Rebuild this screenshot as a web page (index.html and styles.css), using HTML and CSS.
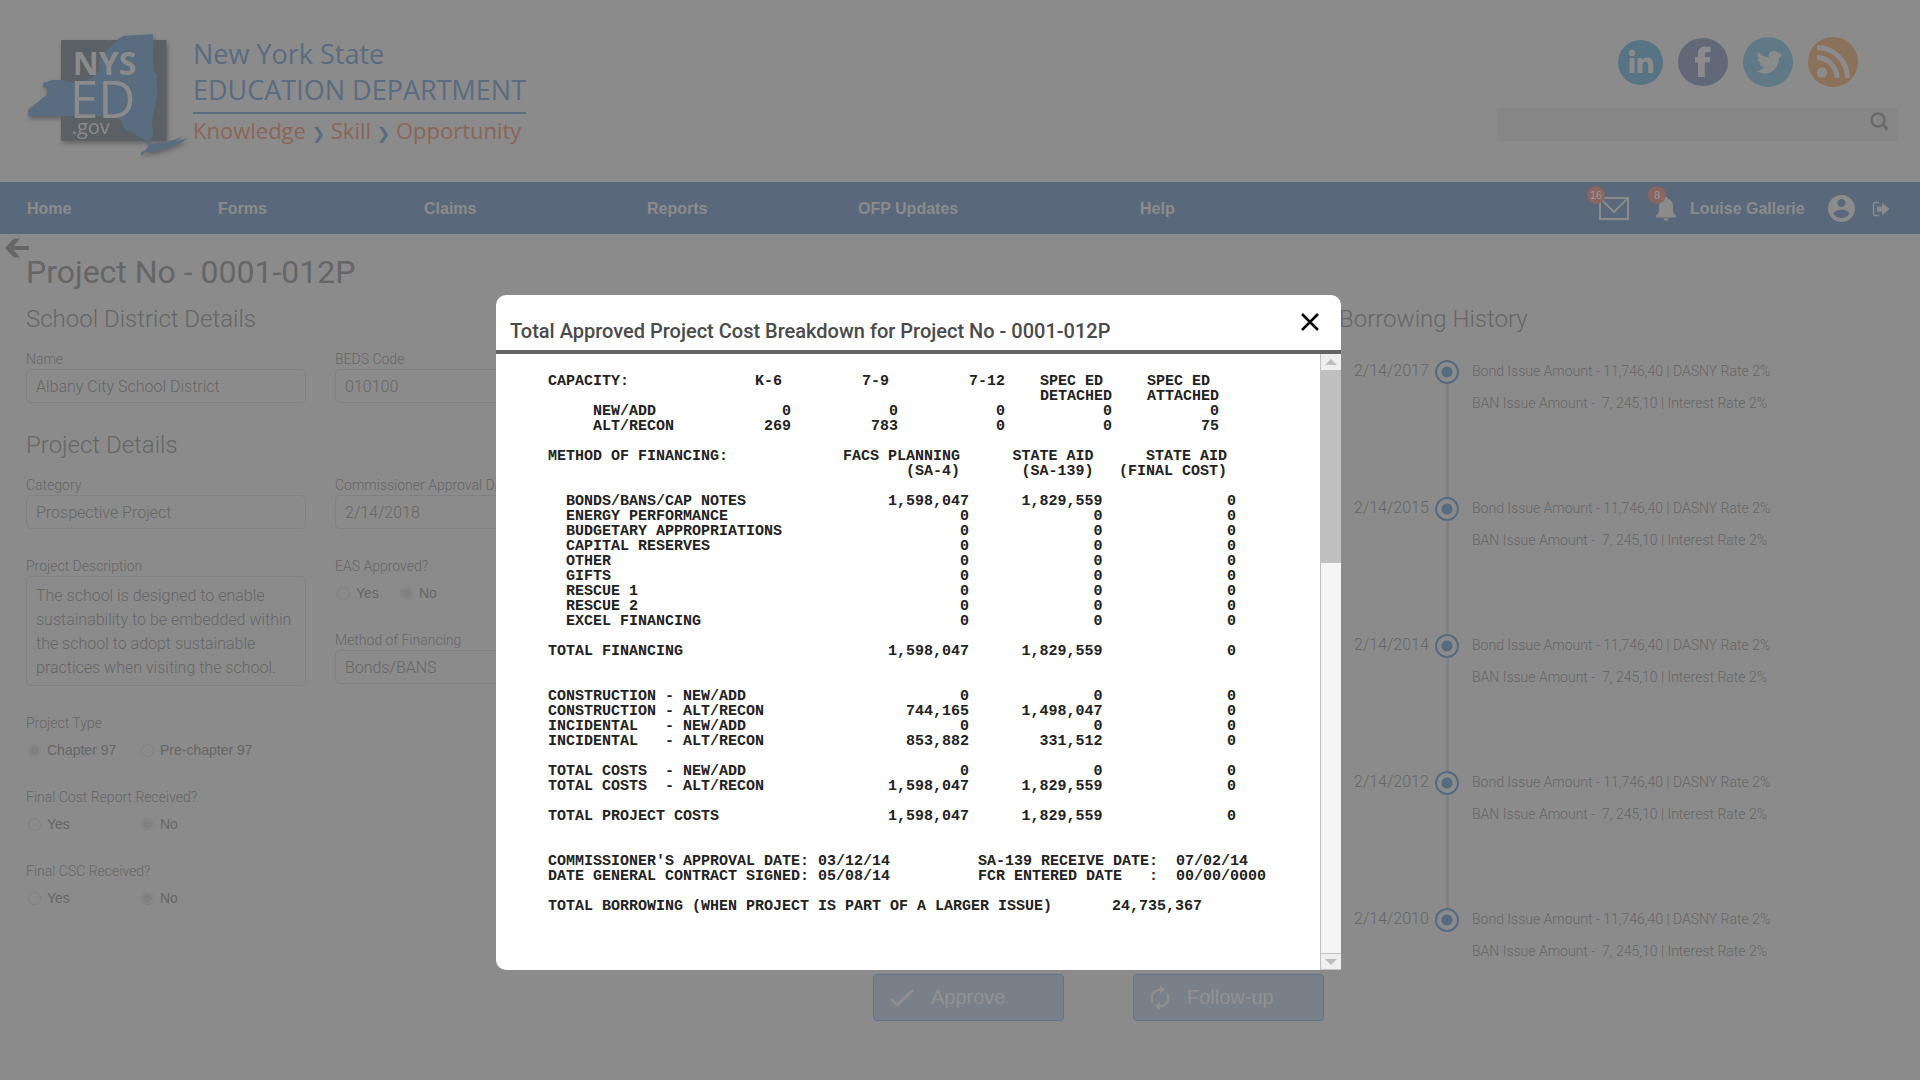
FILE: index.html
```html
<!DOCTYPE html>
<html lang="en">
<head>
<meta charset="utf-8">
<title>Project No - 0001-012P</title>
<link rel="stylesheet" href="styles.css">
</head>
<body>
<header class="top">
	<a class="brand" href="#">
		<svg class="brand-logo" viewBox="77 100 492 387" aria-hidden="true">
			<g class="logo-shadow" transform="scale(1.071 1)">
				<rect x="170" y="121" width="295" height="302" fill="#5a6064"/>
				<path fill="#5a6c7f" d="M78 350V330L130 285 131 265 119 262 120 250 145 241 178 241 202 250 255 236 275 215 278 170 300 150 330 118 347 108 427 104 429 140 426 160 430 215 438 225 440 290 430 340 424 365 428 405 424 412 415 434 430 432 465 426 495 418 515 408 492 425 525 416 500 432 440 454 404 459 396 468 393 460 408 450 416 436 408 425 385 408 350 392 342 378V365L330 355 300 350Z"/>
			</g>
			<text class="logo-nys" x="217" y="227">NYS</text>
			<text class="logo-ed" x="208" y="356">ED</text>
			<text class="logo-gov" x="214" y="404">.gov</text>
		</svg>
		<span class="brand-text">
			<span class="brand-name">New York State</span>
			<span class="brand-name">EDUCATION DEPARTMENT</span>
			<span class="brand-tag">Knowledge <b>❯</b> Skill <b>❯</b> Opportunity</span>
		</span>
	</a>
	<div class="top-side">
		<div class="social">
			<a href="#" aria-label="LinkedIn">
				<svg width="45" height="45" viewBox="0 0 45 45"><circle cx="22.500" cy="22.500" r="22.500" fill="#567483"/><g fill="#8b8b8b"><circle cx="14" cy="13" r="3.200"/><path d="M11.500 18h5v15h-5zM19.500 18h4.700v2c1-1.600 2.700-2.500 4.900-2.500 4.200 0 6.100 2.600 6.100 7V33h-5v-7.800c0-2.300-.8-3.500-2.600-3.500-2 0-3.100 1.400-3.100 3.700V33h-5z"/></g></svg>
			</a>
			<a href="#" aria-label="Facebook">
				<svg width="50" height="48" viewBox="0 0 50 48"><ellipse cx="25" cy="24" rx="25" ry="24" fill="#636878"/><path fill="#8b8b8b" d="M20 39V24.500h-3V19h3v-3c0-5 2.500-7.500 7.500-7.500 2 0 3.600.2 5 .5V14h-3c-2 0-2.700.8-2.700 2.500V19h5.500l-.6 5.500h-4.900V39z"/></svg>
			</a>
			<a href="#" aria-label="Twitter">
				<svg width="50" height="50" viewBox="0 0 50 50"><circle cx="25" cy="25" r="25" fill="#607986"/><path fill="#8b8b8b" transform="translate(13 12)" d="M25.500 4.500c-.9.400-1.900.7-2.900.8 1-.6 1.800-1.600 2.200-2.800-1 .6-2.100 1-3.200 1.200A5.100 5.100 0 0 0 12.800 8.400C8.600 8.200 4.800 6.200 2.300 3.100c-1.300 2.300-.7 5.300 1.600 6.800-.8 0-1.600-.3-2.300-.6 0 2.500 1.700 4.600 4.100 5.100-.7.200-1.500.2-2.300.1.600 2 2.500 3.500 4.700 3.500A10.300 10.300 0 0 1 .5 22.100c2.300 1.500 5 2.300 7.900 2.300 9.400 0 14.700-7.900 14.400-15.100 1-.7 1.900-1.600 2.600-2.600z"/></svg>
			</a>
			<a href="#" aria-label="RSS">
				<svg width="50" height="50" viewBox="0 0 50 50"><circle cx="25" cy="25" r="25" fill="#8b715a"/><circle cx="14" cy="35.500" r="5.200" fill="#8b8b8b"/><g fill="none" stroke="#8b8b8b" stroke-width="5"><path d="M9 20.500A20.500 20.500 0 0 1 29 41"/><path d="M9 10.500A30.500 30.500 0 0 1 39.500 41"/></g></svg>
			</a>
		</div>
		<form class="search">
			<input type="search" aria-label="Search">
			<button type="button" aria-label="Search">
				<svg width="20" height="20" viewBox="0 0 20 20" fill="none" stroke="#6a6a6a"><circle cx="9" cy="9" r="6.500" stroke-width="2.500"/><path d="M13.500 13.500l5 5" stroke-width="3"/></svg>
			</button>
		</form>
	</div>
</header>

<nav class="nav">
	<a href="#">Home</a>
	<a href="#">Forms</a>
	<a href="#">Claims</a>
	<a href="#">Reports</a>
	<a href="#">OFP Updates</a>
	<a href="#">Help</a>
	<div class="user">
		<a class="alert" href="#" aria-label="Messages">
			<svg width="30" height="24" viewBox="0 0 30 24" fill="none" stroke="#8b8b8b" stroke-width="2"><path d="M1 1h28v21H1z"/><path d="M2 2l13 13L28 2"/></svg>
			<span class="badge">16</span>
		</a>
		<a class="alert alert-bell" href="#" aria-label="Notifications">
			<svg width="20" height="24" viewBox="0 0 20 24" fill="#8b8b8b"><path d="M10 0c1 0 1.700.7 1.700 1.700 3.600.8 5.300 3.500 5.300 7.300v6l3 4v1.500H0V19l3-4V9c0-3.800 1.700-6.500 5.300-7.300C8.300.7 9 0 10 0z"/><path d="M7.500 21.500h5c0 1.500-1.100 2.500-2.500 2.500s-2.500-1-2.500-2.500z"/></svg>
			<span class="badge">8</span>
		</a>
		<a class="user-name" href="#">Louise Gallerie</a>
		<a class="account" href="#" aria-label="Account">
			<svg width="27" height="27" viewBox="2 2 20 20" fill="#8b8b8b"><path d="M12 2C6.480 2 2 6.480 2 12s4.480 10 10 10 10-4.480 10-10S17.520 2 12 2zm0 3c1.660 0 3 1.340 3 3s-1.340 3-3 3-3-1.340-3-3 1.340-3 3-3zm0 14.200c-2.500 0-4.710-1.280-6-3.220.030-1.990 4-3.080 6-3.080 1.990 0 5.970 1.090 6 3.080-1.290 1.940-3.500 3.220-6 3.220z"/></svg>
		</a>
		<a href="#" aria-label="Log out">
			<svg width="18" height="16" viewBox="0 0 18 16"><path d="M7 1.500H3.500a2 2 0 0 0-2 2v9a2 2 0 0 0 2 2H7" fill="none" stroke="#8b8b8b" stroke-width="1.500"/><path d="M5 5.500h5V1.500L17.500 8 10 14.500v-4H5z" fill="#8b8b8b"/></svg>
		</a>
	</div>
</nav>

<main class="page">
	<a class="back" href="#" aria-label="Back">
		<svg width="24" height="20" viewBox="0 0 24 20" fill="#666"><path d="M9 .500h6L8.500 8H24v4H8.500L15 19.500H9L0 10z"/></svg>
	</a>
	<h1>Project No - 0001-012P</h1>

	<div class="columns">
		<div class="details">
			<h2>School District Details</h2>
			<div class="row">
				<div class="field">
					<label for="name">Name</label>
					<input id="name" type="text" value="Albany City School District">
				</div>
				<div class="field">
					<label for="beds">BEDS Code</label>
					<input id="beds" type="text" value="010100">
				</div>
			</div>

			<h2 class="second">Project Details</h2>
			<div class="row">
				<div class="stack">
					<div class="field">
						<label for="category">Category</label>
						<input id="category" type="text" value="Prospective Project">
					</div>
					<div class="field">
						<label for="desc">Project Description</label>
						<textarea id="desc">The school is designed to enable sustainability to be embedded within the school to adopt sustainable practices when visiting the school.</textarea>
					</div>
					<fieldset class="choice">
						<legend>Project Type</legend>
						<div class="options">
							<label><input type="radio" name="type" checked>Chapter 97</label>
							<label><input type="radio" name="type">Pre-chapter 97</label>
						</div>
					</fieldset>
					<fieldset class="choice">
						<legend>Final Cost Report Received?</legend>
						<div class="options">
							<label><input type="radio" name="fcr">Yes</label>
							<label><input type="radio" name="fcr" checked>No</label>
						</div>
					</fieldset>
					<fieldset class="choice">
						<legend>Final CSC Received?</legend>
						<div class="options">
							<label><input type="radio" name="csc">Yes</label>
							<label><input type="radio" name="csc" checked>No</label>
						</div>
					</fieldset>
				</div>
				<div class="stack">
					<div class="field">
						<label for="approval">Commissioner Approval Date</label>
						<input id="approval" type="text" value="2/14/2018">
					</div>
					<fieldset class="choice">
						<legend>EAS Approved?</legend>
						<div class="options options-near">
							<label><input type="radio" name="eas">Yes</label>
							<label><input type="radio" name="eas" checked>No</label>
						</div>
					</fieldset>
					<div class="field">
						<label for="method">Method of Financing</label>
						<input id="method" type="text" value="Bonds/BANS">
					</div>
				</div>
			</div>
		</div>

		<section class="history">
			<h2>Borrowing History</h2>
			<ol>
				<li>
					<time>2/14/2017</time><span class="rail"></span>
					<div><p>Bond Issue Amount - 11,746,40 | DASNY Rate 2%</p><p>BAN Issue Amount - &nbsp;7, 245,10 | Interest Rate 2%</p></div>
				</li>
				<li>
					<time>2/14/2015</time><span class="rail"></span>
					<div><p>Bond Issue Amount - 11,746,40 | DASNY Rate 2%</p><p>BAN Issue Amount - &nbsp;7, 245,10 | Interest Rate 2%</p></div>
				</li>
				<li>
					<time>2/14/2014</time><span class="rail"></span>
					<div><p>Bond Issue Amount - 11,746,40 | DASNY Rate 2%</p><p>BAN Issue Amount - &nbsp;7, 245,10 | Interest Rate 2%</p></div>
				</li>
				<li>
					<time>2/14/2012</time><span class="rail"></span>
					<div><p>Bond Issue Amount - 11,746,40 | DASNY Rate 2%</p><p>BAN Issue Amount - &nbsp;7, 245,10 | Interest Rate 2%</p></div>
				</li>
				<li>
					<time>2/14/2010</time><span class="rail"></span>
					<div><p>Bond Issue Amount - 11,746,40 | DASNY Rate 2%</p><p>BAN Issue Amount - &nbsp;7, 245,10 | Interest Rate 2%</p></div>
				</li>
			</ol>
		</section>
	</div>

	<div class="actions">
		<button type="button">
			<svg width="26" height="26" viewBox="0 0 26 26" fill="none" stroke="#8f8f8f" stroke-width="3"><path d="M2 14l6 6L24 5"/></svg>
			Approve
		</button>
		<button type="button">
			<svg width="22" height="28" viewBox="3 0 18 24" fill="#8f8f8f"><path d="M12 6v3l4-4-4-4v3c-4.420 0-8 3.580-8 8 0 1.570.46 3.030 1.240 4.260L6.700 14.800A5.870 5.870 0 0 1 6 12c0-3.310 2.690-6 6-6zm6.760 1.740L17.300 9.200c.44.840.7 1.790.7 2.800 0 3.310-2.690 6-6 6v-3l-4 4 4 4v-3c4.420 0 8-3.580 8-8 0-1.570-.46-3.030-1.240-4.260z"/></svg>
			Follow-up
		</button>
	</div>
</main>

<div class="overlay">
	<section class="modal" role="dialog" aria-labelledby="modal-title">
		<header class="modal-head">
			<h3 id="modal-title">Total Approved Project Cost Breakdown for Project No - 0001-012P</h3>
			<button type="button" aria-label="Close">
				<svg width="18" height="18" viewBox="0 0 18 18" stroke="#000" stroke-width="2.500"><path d="M1 1l16 16M17 1L1 17"/></svg>
			</button>
		</header>
		<div class="modal-body">
			<div class="report">
				<table class="capacity">
					<colgroup><col class="c-label"><col><col><col><col><col></colgroup>
					<tr><th>CAPACITY:</th><th class="in">K-6</th><th class="in">7-9</th><th>7-12</th><th class="in">SPEC ED</th><th class="in">SPEC ED</th></tr>
					<tr><th></th><th></th><th></th><th></th><th>DETACHED</th><th>ATTACHED</th></tr>
					<tr><td>     NEW/ADD</td><td>0</td><td>0</td><td>0</td><td>0</td><td>0</td></tr>
					<tr><td>     ALT/RECON</td><td>269</td><td>783</td><td>0</td><td>0</td><td>75</td></tr>
				</table>
				<table class="financing">
					<colgroup><col class="c-label"><col class="c-facs"><col><col></colgroup>
					<tr><th>METHOD OF FINANCING:</th><th class="in">FACS PLANNING</th><th class="in">STATE AID</th><th class="in">STATE AID</th></tr>
					<tr class="gap"><th></th><th class="in">(SA-4)</th><th class="in">(SA-139)</th><th class="in">(FINAL COST)</th></tr>
					<tr><td>  BONDS/BANS/CAP NOTES</td><td>1,598,047</td><td>1,829,559</td><td>0</td></tr>
					<tr><td>  ENERGY PERFORMANCE</td><td>0</td><td>0</td><td>0</td></tr>
					<tr><td>  BUDGETARY APPROPRIATIONS</td><td>0</td><td>0</td><td>0</td></tr>
					<tr><td>  CAPITAL RESERVES</td><td>0</td><td>0</td><td>0</td></tr>
					<tr><td>  OTHER</td><td>0</td><td>0</td><td>0</td></tr>
					<tr><td>  GIFTS</td><td>0</td><td>0</td><td>0</td></tr>
					<tr><td>  RESCUE 1</td><td>0</td><td>0</td><td>0</td></tr>
					<tr><td>  RESCUE 2</td><td>0</td><td>0</td><td>0</td></tr>
					<tr class="gap"><td>  EXCEL FINANCING</td><td>0</td><td>0</td><td>0</td></tr>
					<tr class="gap-2"><td>TOTAL FINANCING</td><td>1,598,047</td><td>1,829,559</td><td>0</td></tr>
					<tr><td>CONSTRUCTION - NEW/ADD</td><td>0</td><td>0</td><td>0</td></tr>
					<tr><td>CONSTRUCTION - ALT/RECON</td><td>744,165</td><td>1,498,047</td><td>0</td></tr>
					<tr><td>INCIDENTAL   - NEW/ADD</td><td>0</td><td>0</td><td>0</td></tr>
					<tr class="gap"><td>INCIDENTAL   - ALT/RECON</td><td>853,882</td><td>331,512</td><td>0</td></tr>
					<tr><td>TOTAL COSTS  - NEW/ADD</td><td>0</td><td>0</td><td>0</td></tr>
					<tr class="gap"><td>TOTAL COSTS  - ALT/RECON</td><td>1,598,047</td><td>1,829,559</td><td>0</td></tr>
					<tr class="gap-2"><td>TOTAL PROJECT COSTS</td><td>1,598,047</td><td>1,829,559</td><td>0</td></tr>
				</table>
				<div class="dates">
					<p>COMMISSIONER'S APPROVAL DATE: 03/12/14</p>
					<p>SA-139 RECEIVE DATE:  07/02/14</p>
					<p>DATE GENERAL CONTRACT SIGNED: 05/08/14</p>
					<p>FCR ENTERED DATE   :  00/00/0000</p>
				</div>
				<p class="borrowing"><span>TOTAL BORROWING (WHEN PROJECT IS PART OF A LARGER ISSUE)</span><span>24,735,367</span></p>
			</div>
			<div class="scroll">
				<button type="button" aria-label="Scroll up"><svg width="12" height="6" viewBox="0 0 12 6" fill="#bdbdbd"><path d="M0 6l6-6 6 6z"/></svg></button>
				<div class="scroll-track"><div class="scroll-thumb"></div></div>
				<button type="button" aria-label="Scroll down"><svg width="12" height="6" viewBox="0 0 12 6" fill="#bdbdbd"><path d="M0 0l6 6 6-6z"/></svg></button>
			</div>
		</div>
	</section>
</div>
</body>
</html>
```

FILE: styles.css
```css
*{box-sizing:border-box;}
body{margin:0; background-color:#8b8b8b; color:#666; font-family:Roboto, sans-serif; font-weight:300; font-size:16px;}
h1,h2,h3,p,ol,fieldset{margin:0; padding:0; border:0;}
ol{list-style:none;}
a{color:inherit; text-decoration:none;}
svg{display:block;}
button{padding:0; border:0; background:none; font:inherit; color:inherit;}
input,textarea{font:inherit; color:inherit;}

/* header */
.top{display:flex; justify-content:space-between; height:182px; padding:33px 22px 0 26px;}
.brand{display:flex; gap:3px;}
.brand-logo{flex:none; width:164px; height:129px;}
.logo-shadow{filter:drop-shadow(4px 8px 6px rgba(60,60,60,0.5));}
.brand-logo text{fill:#8b8b8b; font-family:"Open Sans", sans-serif;}
.brand-logo .logo-nys{font-size:96px; font-weight:700;}
.brand-logo .logo-ed{font-size:154px; font-weight:400;}
.brand-logo .logo-gov{font-size:60px; font-weight:400;}
.brand-text{display:flex; flex-direction:column; color:#5a6c7f; font-family:"Open Sans", sans-serif; font-weight:400; padding-top:3px; white-space:nowrap;}
.brand-name{font-size:27px; line-height:36px;}
.brand-tag{margin-top:4px; border-top:2px solid #5a6c7f; color:#8b6557; font-size:22px; line-height:32px;}
.brand-tag b{color:#5a6c7f; font-family:"DejaVu Sans", sans-serif; font-size:16px;}
.top-side{width:401px;}
.social{display:flex; justify-content:flex-end; align-items:center; gap:15px; height:58px; padding-right:40px;}
.search{display:flex; margin-top:17px; height:33px; background:#868686;}
.search input{flex:1; min-width:0; border:0; background:none; padding:0 10px;}
.search button{display:flex; align-items:flex-start; padding:3px 9px 0 0;}

/* navigation */
.nav{display:grid; grid-template-columns:191fr 206fr 223fr 211fr 282fr 445fr 335px; align-items:center; height:52px; padding:1px 0 0 27px; background:#59697b; color:#8b8b8b; font-family:"Liberation Sans", Arial, sans-serif; font-size:16px; font-weight:700;}
.user{display:flex; align-items:center; padding-left:14px;}
.alert{position:relative;}
.alert-bell{margin-left:27px;}
.badge{position:absolute; left:-12px; top:-11px; width:18px; height:18px; border-radius:50%; background:#8b6560; color:#999; font-size:11px; font-weight:400; line-height:18px; text-align:center;}
.alert-bell .badge{left:-8px;}
.user-name{margin-left:14px;}
.account{margin:0 17px 0 23px;}

/* project page */
.back{display:block; padding:4px 0 0 5px; height:18px;}
h1{padding-left:26px; font-size:32px; line-height:40px; font-weight:400;}
h2{font-size:24px; line-height:32px; font-weight:300; margin-bottom:14px;}
h2.second{margin-top:26px;}
.columns{display:flex; justify-content:space-between; padding:11px 0 0 26px;}
.row{display:flex; gap:29px;}
.stack{display:flex; flex-direction:column; gap:27px;}
.field{display:flex; flex-direction:column; width:280px;}
.field label,.choice legend{font-size:14px; line-height:20px; padding:0;}
.field input,.field textarea{border:1px solid #818181; border-radius:5px; background:none; height:34px; padding:0 4px 0 9px; outline:0;}
.field textarea{height:110px; padding-top:7px; line-height:24px; resize:none; overflow:hidden;}
.options{display:flex; padding-top:7px;}
.options label{display:flex; align-items:center; gap:6px; width:113px; height:20px; font-family:"Liberation Sans", Arial, sans-serif; font-weight:400; font-size:14px; white-space:nowrap;}
.options-near label{width:63px;}
.options input{appearance:none; flex:none; width:13px; height:13px; margin:0 0 0 2px; border:1px solid #818181; border-radius:50%;}
.options input:checked{background:radial-gradient(circle, #808080 4px, transparent 5px);}

/* borrowing history */
.history{width:581px;}
.history h2{margin-bottom:20px;}
.history li{display:flex; min-height:137px; padding-left:15px;}
.history li:last-child{min-height:64px;}
.history time{width:83px; line-height:32px;}
.history p{font-size:14px; line-height:32px;}
.rail{display:flex; flex-direction:column; align-items:center; width:20px; margin:5px 15px -5px 0;}
.rail:before{content:""; width:20px; height:20px; flex:none; border:2px solid #566a80; border-radius:50%; background:radial-gradient(circle, #566a80 5px, transparent 6px);}
.rail:after{content:""; width:3px; flex:1; background:#808080;}
.history li:last-child .rail:after{display:none;}

.actions{display:flex; gap:69px; padding:7px 0 40px 873px;}
.actions button{display:flex; align-items:center; gap:16px; width:191px; height:47px; padding-left:15px; border:1px solid #5f7489; border-radius:4px; background:#7a8088; color:#919191; font-family:"Liberation Sans", Arial, sans-serif; font-weight:400; font-size:20px;}

/* modal */
.overlay{position:absolute; top:295px; left:0; right:0; display:flex; padding-left:496px;}
.modal{width:845px; border-radius:10px 10px 0 10px; background:#fff; overflow:hidden;}
.modal-head{display:flex; justify-content:space-between; height:59px; padding:12px 16px 4px 14px; border-bottom:4px solid #656364; color:#4a4a4a;}
.modal-head h3{align-self:flex-end; font-size:20px; line-height:30px; font-weight:500;}
.modal-head button{display:flex; align-items:center; justify-content:center; width:30px; height:30px;}
.modal-body{display:flex; justify-content:space-between;}
.report{padding:20px 0 56px 52px; color:#222; font-family:"Liberation Mono", monospace; font-weight:700; font-size:15px; line-height:15px;}
.report table{table-layout:fixed; border-collapse:collapse;}
.report th,.report td{padding:0; height:15px; text-align:right; font-weight:700; vertical-align:top; white-space:pre;}
.report th:first-child,.report td:first-child{text-align:left;}
.report .in{padding-right:9px;}
.capacity{width:671px; margin-bottom:15px;}
.capacity .c-label{width:136px;}
.financing{width:688px;}
.financing .c-label{width:234px;}
.financing .c-facs{width:187px;}
.report .gap th,.report .gap td{height:30px;}
.report .gap-2 td{height:45px;}
.report p{white-space:pre;}
.dates{display:grid; grid-template-columns:430px auto; margin-bottom:15px;}
.borrowing{display:grid; grid-template-columns:564px auto;}
.scroll{display:flex; flex-direction:column; width:21px; border-left:1px solid #c0c0c0; background:#f5f5f5;}
.scroll button{display:flex; align-items:center; justify-content:center; height:17px; background:#efefef; border-bottom:1px solid #c0c0c0;}
.scroll button:last-child{border-top:1px solid #c0c0c0;}
.scroll-track{flex:1;}
.scroll-thumb{height:33%; background:#c0c0c0;}
```
